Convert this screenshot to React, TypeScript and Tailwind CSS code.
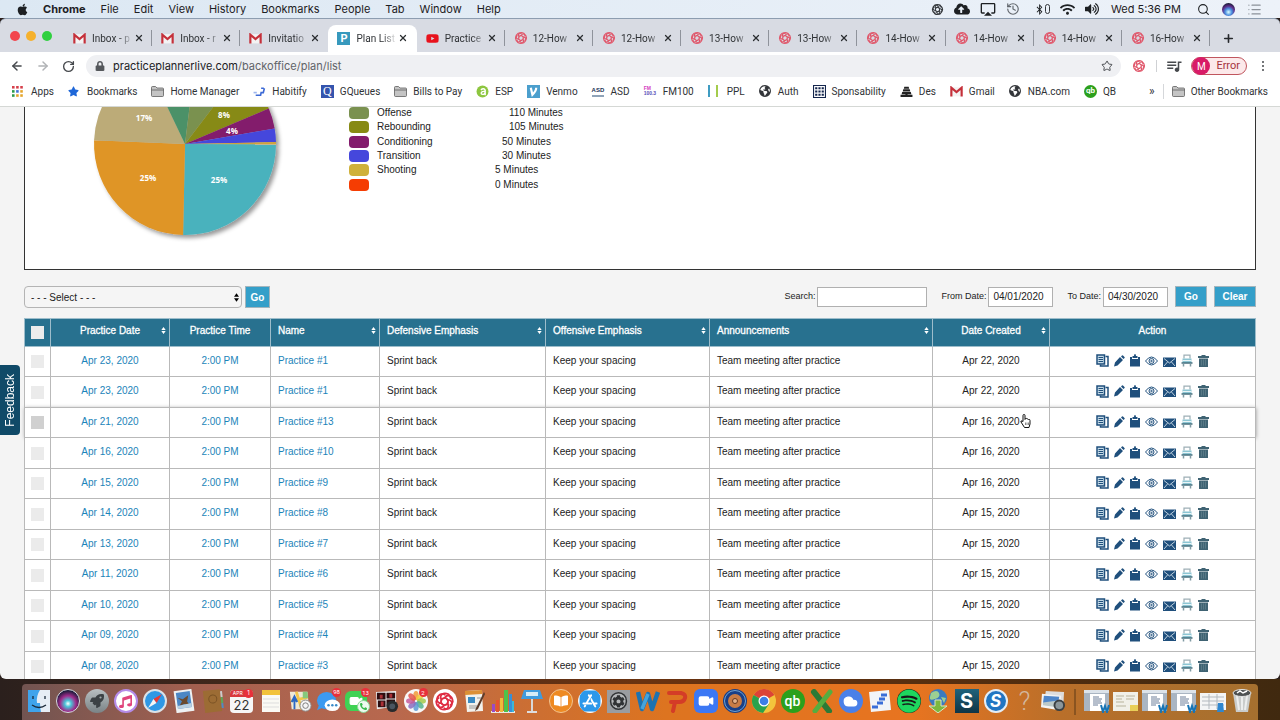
import type { ReactNode } from 'react'
import { ArrowLeft, ArrowRight, Cloud, History, List, Plus, RotateCw, Search, Star, Video, X } from 'lucide-react'
import { FaApple, FaBluetoothB, FaBookOpen, FaCloudUploadAlt, FaCog, FaLock, FaMusic, FaPhoneAlt, FaRocket, FaSpotify, FaStar, FaVolumeUp, FaWifi, FaYoutube } from 'react-icons/fa'
import { FaAppStoreIos, FaEarthAmericas } from 'react-icons/fa6'
import { MdOutlineAirplay, MdQueueMusic } from 'react-icons/md'

interface Plan {
  date: string
  name: string
  created: string
}

const plans: Plan[] = [
  { date: 'Apr 23, 2020', name: 'Practice #1', created: 'Apr 22, 2020' },
  { date: 'Apr 23, 2020', name: 'Practice #1', created: 'Apr 22, 2020' },
  { date: 'Apr 21, 2020', name: 'Practice #13', created: 'Apr 16, 2020' },
  { date: 'Apr 16, 2020', name: 'Practice #10', created: 'Apr 16, 2020' },
  { date: 'Apr 15, 2020', name: 'Practice #9', created: 'Apr 16, 2020' },
  { date: 'Apr 14, 2020', name: 'Practice #8', created: 'Apr 15, 2020' },
  { date: 'Apr 13, 2020', name: 'Practice #7', created: 'Apr 15, 2020' },
  { date: 'Apr 11, 2020', name: 'Practice #6', created: 'Apr 15, 2020' },
  { date: 'Apr 10, 2020', name: 'Practice #5', created: 'Apr 15, 2020' },
  { date: 'Apr 09, 2020', name: 'Practice #4', created: 'Apr 15, 2020' },
  { date: 'Apr 08, 2020', name: 'Practice #3', created: 'Apr 15, 2020' }
]

const legend = [
  { label: 'Offense', value: '110 Minutes', color: 'bg-[#7a9150]', indent: 'pl-[14px]' },
  { label: 'Rebounding', value: '105 Minutes', color: 'bg-[#878a14]', indent: 'pl-[14px]' },
  { label: 'Conditioning', value: '50 Minutes', color: 'bg-[#831b6c]', indent: 'pl-[7px]' },
  { label: 'Transition', value: '30 Minutes', color: 'bg-[#4547dc]', indent: 'pl-[7px]' },
  { label: 'Shooting', value: '5 Minutes', color: 'bg-[#cfb13b]', indent: '' },
  { label: '', value: '0 Minutes', color: 'bg-[#f53d03]', indent: '' }
]

// start and end are degrees, clockwise from three o'clock
const slices = [
  { start: 0.2, end: 91.2, color: '#48b2bd' },
  { start: 91.2, end: 182.3, color: '#df9527' },
  { start: 182.3, end: 244.5, color: '#bcab78' },
  { start: 244.5, end: 277, color: '#4c9168' },
  { start: 277, end: 307.3, color: '#7a9150' },
  { start: 307.3, end: 337.1, color: '#878a14' },
  { start: 337.1, end: 350.2, color: '#831b6c' },
  { start: 350.2, end: 358.8, color: '#4547dc' },
  { start: 358.8, end: 360.2, color: '#cfa33b' }
]

function slicePath(start: number, end: number) {
  const r = 91
  const rad = Math.PI / 180
  const x1 = 160 + r * Math.cos(start * rad)
  const y1 = 37 + r * Math.sin(start * rad)
  const x2 = 160 + r * Math.cos(end * rad)
  const y2 = 37 + r * Math.sin(end * rad)
  return `M160 37L${x1} ${y1}A${r} ${r} 0 ${end - start > 180 ? 1 : 0} 1 ${x2} ${y2}Z`
}

function PieChart() {
  return (
    <svg width="324" height="162" viewBox="0 0 324 162" className="shrink-0" role="img" aria-label="Practice time by category">
      <defs>
        <filter id="pieShadow" x="-10%" y="-10%" width="125%" height="125%">
          <feDropShadow dx="3" dy="3" stdDeviation="2" floodColor="#000" floodOpacity="0.4" />
        </filter>
      </defs>
      <g filter="url(#pieShadow)">
        {slices.map((s) => (
          <path key={s.start} d={slicePath(s.start, s.end)} fill={s.color} />
        ))}
      </g>
      <g fill="#fff" fontFamily="'Open Sans', sans-serif" fontSize="8" fontWeight="700" textAnchor="middle">
        <text x="119" y="14">17%</text>
        <text x="199" y="11">8%</text>
        <text x="207" y="27">4%</text>
        <text x="123" y="74">25%</text>
        <text x="194" y="76">25%</text>
      </g>
    </svg>
  )
}

function Loom({ color = '#e0566a', className = 'size-[14px]' }: { color?: string; className?: string }) {
  return (
    <svg viewBox="0 0 24 24" className={className} fill="none" stroke={color} strokeWidth="2">
      {[0, 60, 120, 180, 240, 300].map((a) => (
        <path key={a} transform={`rotate(${a} 12 12)`} d="M12 8C15 3 21 5 21.500 12C21 15 19 16 18 16.500M12 8C10 8 8.500 9.500 8 11" />
      ))}
    </svg>
  )
}

function GmailIcon() {
  return (
    <svg viewBox="0 0 24 20" className="h-[11px] w-[13px]">
      <path d="M3 2h18v17H3z" fill="#f3f3f3" />
      <path d="M2.500 19V3L12 11l9.500-8v16" fill="none" stroke="#c5303a" strokeWidth="4" />
    </svg>
  )
}

function FolderIcon() {
  return (
    <svg viewBox="0 0 26 22" className="h-[11px] w-[13px]" stroke="#555" strokeWidth="1.500">
      <path d="M1 19V3q0-2 2-2h6l3 3h11q2 0 2 2v13q0 2-2 2H3q-2 0-2-2z" fill="#c4c4c4" />
      <path d="M1 8h24" />
    </svg>
  )
}

function AppsIcon() {
  const colors = ['#d6404b', '#d6404b', '#d6404b', '#2c9a4b', '#3f72d8', '#e5a52b', '#2c9a4b', '#e5a52b', '#e5a52b']
  return (
    <svg viewBox="0 0 12 12" className="size-[11px]">
      {colors.map((c, i) => (
        <rect key={i} x={(i % 3) * 4.500} y={Math.floor(i / 3) * 4.500} width="2.800" height="2.800" fill={c} />
      ))}
    </svg>
  )
}

const bookmarks: { label: string; icon: ReactNode }[] = [
  { label: 'Apps', icon: <AppsIcon /> },
  { label: 'Bookmarks', icon: <FaStar className="size-[11px] text-[#1f67d8]" /> },
  { label: 'Home Manager', icon: <FolderIcon /> },
  {
    label: 'Habitify',
    icon: (
      <svg viewBox="0 0 24 24" className="size-[13px]" fill="none" stroke="#3d6ad6" strokeWidth="3">
        <path d="M1 14h6" stroke="#9db6ee" />
        <path d="M5 19h9l1-5h4l2-8M15 6h5" />
      </svg>
    )
  },
  {
    label: 'GQueues',
    icon: <span className="flex size-[13px] items-center justify-center bg-[#3454ad] font-['Liberation_Serif',serif] text-[12px] leading-none text-white">Q</span>
  },
  { label: 'Bills to Pay', icon: <FolderIcon /> },
  {
    label: 'ESP',
    icon: (
      <svg viewBox="0 0 24 24" className="size-[13px]">
        <circle cx="12" cy="12" r="11" fill="#8dc63f" />
        <path d="M9 9c6-5 9 0 8 4s-3 5-6 4-1-6 5-5M17 11v8" stroke="#fff" strokeWidth="2.500" fill="none" />
      </svg>
    )
  },
  {
    label: 'Venmo',
    icon: (
      <svg viewBox="0 0 24 24" className="size-[13px]">
        <path d="M0 0h24v24H0z" fill="#4b9fcd" />
        <path d="M7 5l3 13C14 14 17 10 17 5" fill="none" stroke="#fff" strokeWidth="4" />
      </svg>
    )
  },
  {
    label: 'ASD',
    icon: <span className="border-b-2 border-[#8fa3b8] font-['Liberation_Sans',sans-serif] text-[6px] font-bold leading-[9px] text-[#1a3155]">ASD</span>
  },
  {
    label: 'FM100',
    icon: <span className="flex flex-col font-['Liberation_Sans',sans-serif] text-[5px] font-bold leading-[5px] text-[#d33fc0]"><span>FM</span><span className="text-[#5a4fb8]">100.3</span></span>
  },
  {
    label: 'PPL',
    icon: <span className="flex h-[12px] w-[10px] justify-between border-x-2 border-l-[#3f9cc2] border-r-[#a4cc4c]" />
  },
  { label: 'Auth', icon: <FaEarthAmericas className="size-[12px] text-[#33363a]" /> },
  {
    label: 'Sponsability',
    icon: (
      <svg viewBox="0 0 24 24" className="size-[13px]">
        <path d="M1 1h22v22H1z" fill="#fff" stroke="#14264d" strokeWidth="2" />
        <path d="M4 4h4v4H4zM10 4h4v4h-4zM16 4h4v4h-4zM4 10h4v4H4zM10 10h4v4h-4zM16 10h4v4h-4zM4 16h4v4H4zM10 16h4v4h-4zM16 16h4v4h-4z" fill="#14264d" />
      </svg>
    )
  },
  {
    label: 'Des',
    icon: (
      <svg viewBox="0 0 24 24" className="size-[13px]" fill="#222">
        <path d="M8 3h8l1 4H7zM6 8h12l1 4H5zM4 13h16l1 4H3zM1 18h9v-1h4v1h9v4H1z" />
      </svg>
    )
  },
  { label: 'Gmail', icon: <GmailIcon /> },
  { label: 'NBA.com', icon: <FaEarthAmericas className="size-[12px] text-[#33363a]" /> },
  {
    label: 'QB',
    icon: <span className="flex size-[13px] items-center justify-center rounded-full bg-[#2ca01c] text-[8px] font-bold leading-none text-white">qb</span>
  }
]

const tabs: { title: string; icon: 'gmail' | 'plan' | 'youtube' | 'loom' }[] = [
  { title: 'Inbox - p', icon: 'gmail' },
  { title: 'Inbox - r', icon: 'gmail' },
  { title: 'Invitatio', icon: 'gmail' },
  { title: 'Plan List', icon: 'plan' },
  { title: 'Practice', icon: 'youtube' },
  { title: '12-How', icon: 'loom' },
  { title: '12-How', icon: 'loom' },
  { title: '13-How', icon: 'loom' },
  { title: '13-How', icon: 'loom' },
  { title: '14-How', icon: 'loom' },
  { title: '14-How', icon: 'loom' },
  { title: '14-How', icon: 'loom' },
  { title: '16-How', icon: 'loom' }
]

function MenuBar() {
  return (
    <header className="flex h-[18px] shrink-0 items-center bg-gradient-to-r from-[#dce8f3] to-[#edf2f9] pl-4 pr-[18px] font-[Inter,sans-serif] text-[11px] text-[#1d2023]">
      <FaApple className="size-[13px]" />
      <nav className="ml-[14px] flex flex-1 items-center gap-[15px]">
        <span className="font-bold">Chrome</span>
        {['File', 'Edit', 'View', 'History', 'Bookmarks', 'People', 'Tab', 'Window', 'Help'].map((m) => (
          <span key={m}>{m}</span>
        ))}
      </nav>
      <div className="flex items-center gap-3">
        <div className="flex items-center gap-[10px]">
          <Loom color="#33373b" className="size-[13px]" />
          <FaCloudUploadAlt className="size-[16px]" />
          <MdOutlineAirplay className="size-[16px]" />
          <History className="size-[14px] text-[#62676d]" />
          <span className="flex items-center pl-1">
            <FaBluetoothB className="size-[11px]" />
            <span className="h-[10px] w-[5px] rounded-sm border border-[#33373b]" />
          </span>
          <FaWifi className="size-[15px]" />
          <FaVolumeUp className="size-[14px]" />
        </div>
        <span>Wed 5:36 PM</span>
        <Search className="ml-1 size-[13px]" />
        <span className="size-[13px] rounded-full bg-[radial-gradient(circle_at_50%_70%,#dff_0%,#4a8fe0_30%,#5b2a86_55%,#161b33_80%)]" />
        <List className="size-[15px] text-[#8b9199]" />
      </div>
    </header>
  )
}

function TabStrip() {
  return (
    <div className="flex h-[34px] shrink-0 items-end rounded-t-md border-t border-[#8d9db0] bg-[#d8dbe3]">
      <div className="flex h-full w-[64px] shrink-0 items-center gap-[6px] pl-[10px]">
        <span className="size-[10px] rounded-full bg-[#f2454d]" />
        <span className="size-[10px] rounded-full bg-[#f6b12d]" />
        <span className="size-[10px] rounded-full bg-[#2fd03f]" />
      </div>
      {tabs.map((tab, i) => (
        <div
          key={i}
          className={`flex h-[27px] min-w-0 flex-1 items-center pb-px pl-[9px] text-[10px] text-[#2f3235] ${i === 3 ? 'rounded-t-lg bg-white' : ''}`}
        >
          <span className="flex w-[19px] shrink-0 items-center">
            {tab.icon === 'gmail' && <GmailIcon />}
            {tab.icon === 'plan' && <span className="flex size-[13px] items-center justify-center bg-[#3799bd] text-[11px] font-bold leading-none text-white">P</span>}
            {tab.icon === 'youtube' && <FaYoutube className="size-[13px] text-[#e8121c]" />}
            {tab.icon === 'loom' && <Loom />}
          </span>
          <span className="w-[41px] shrink-0 whitespace-nowrap [mask-image:linear-gradient(to_right,black_65%,transparent)]">{tab.title}</span>
          <button aria-label="Close tab" className="ml-px">
            <X className="size-[10px] text-[#2b2e31]" strokeWidth={3} />
          </button>
          {i !== 2 && i !== 3 && <span className="ml-auto h-4 w-px bg-[#8f939b]" />}
        </div>
      ))}
      <button aria-label="New tab" className="flex h-[27px] w-[70px] shrink-0 items-center pl-3">
        <Plus className="size-[13px] text-[#26292c]" strokeWidth={3} />
      </button>
    </div>
  )
}

function Toolbar() {
  return (
    <div className="flex h-[28px] shrink-0 items-center bg-white pl-[10px] pr-[14px]">
      <div className="flex items-center gap-3 pr-[11px] text-[#46494d]">
        <button aria-label="Back"><ArrowLeft className="size-[14px]" strokeWidth={2.500} /></button>
        <button aria-label="Forward"><ArrowRight className="size-[14px] text-[#b0b2b5]" strokeWidth={2.500} /></button>
        <button aria-label="Reload"><RotateCw className="size-[13px]" strokeWidth={2.500} /></button>
      </div>
      <div className="flex h-[22px] flex-1 items-center rounded-full bg-[#eff0f3] pl-[9px] pr-2">
        <FaLock className="size-[10px] text-[#55585c]" />
        <span className="ml-2 flex-1 font-[Inter,sans-serif] text-[11px] text-[#5f6368]">
          <span className="text-[#202124]">practiceplannerlive.com</span>/backoffice/plan/list
        </span>
        <Star className="size-[12px] text-[#4a4d51]" />
      </div>
      <Loom className="ml-[11px] size-[14px]" />
      <span className="ml-[10px] h-3 w-px bg-[#cfd1d4]" />
      <MdQueueMusic className="ml-2 size-[18px] text-[#46494d]" />
      <button className="ml-2 flex h-[18px] items-center gap-[6px] rounded-full border border-[#c0565e] bg-[#fce9ea] pr-[6px] text-[11px] text-[#a5333d]">
        <span className="flex size-[18px] items-center justify-center rounded-full bg-[#d81b67] text-[10px] text-white">M</span>
        Error
      </button>
      <button aria-label="Chrome menu" className="ml-[15px] mr-[2px] flex flex-col gap-[2px]">
        <span className="size-[2px] rounded-full bg-[#46494d]" />
        <span className="size-[2px] rounded-full bg-[#46494d]" />
        <span className="size-[2px] rounded-full bg-[#46494d]" />
      </button>
    </div>
  )
}

function BookmarksBar() {
  return (
    <nav className="flex h-[27px] shrink-0 items-center gap-[14px] overflow-hidden whitespace-nowrap border-b border-[#d5d8d5] bg-white pb-1 pl-3 pr-3 text-[10px] text-[#2f3235]">
      {bookmarks.map((b) => (
        <a key={b.label} href="#" className="flex items-center gap-[6px]">
          <span className="flex w-[13px] items-center">{b.icon}</span>
          {b.label}
        </a>
      ))}
      <span className="ml-auto flex items-center">
        <button aria-label="More bookmarks" className="pr-2 text-[12px] leading-none">»</button>
        <a href="#" className="flex items-center gap-[6px] border-l border-[#d5d7da] pl-2">
          <FolderIcon />
          Other Bookmarks
        </a>
      </span>
    </nav>
  )
}

function SortArrows() {
  return (
    <svg viewBox="0 0 5 8" className="h-[7px] w-[5px] shrink-0" fill="currentColor">
      <path d="M2.500 0L5 3.300H0zM2.500 8L0 4.700h5z" />
    </svg>
  )
}

function HeaderCell({ label, center, sort = true }: { label: string; center?: boolean; sort?: boolean }) {
  return (
    <th scope="col" className="border border-[#9dbdcb] pb-1 pr-[3px] font-normal">
      <div className={`flex items-center ${center ? (sort ? 'pl-2 text-center' : 'pl-[3px] text-center') : 'pl-[7px] text-left'}`}>
        <span className="flex-1 [-webkit-text-stroke:0.3px_white]">{label}</span>
        {sort && <SortArrows />}
      </div>
    </th>
  )
}

function RowActions() {
  return (
    <div className="flex items-center justify-center gap-[5px] text-[#1f4f7c]">
      <button aria-label="Copy">
        <svg viewBox="0 0 26 26" className="size-[13px]" fill="none" stroke="currentColor" strokeWidth="3">
          <path d="M2 2h15v18H2z" fill="#c5dbe8" />
          <path d="M19 5h5v19H9v-3" />
          <path d="M5 7h9M5 11h9M5 15h9" strokeWidth="2.200" />
        </svg>
      </button>
      <button aria-label="Edit">
        <svg viewBox="0 0 22 24" className="h-[12px] w-[11px]" fill="currentColor">
          <path d="M0 23l2-8L12 4l6 6L7 21zM14 3l2-2q1-1 2 0l3 3q1 1 0 2l-2 2z" />
        </svg>
      </button>
      <button aria-label="Assign">
        <svg viewBox="0 0 20 26" className="h-[13px] w-[10px]" fill="currentColor">
          <path d="M0 6h4v4h12V6h4v19H0zM5 8V4h3q0-4 2-4t2 4h3v4z" />
        </svg>
      </button>
      <button aria-label="View">
        <svg viewBox="0 0 26 20" className="h-[10px] w-[13px]" fill="none" stroke="currentColor" strokeWidth="2">
          <path d="M1 10Q13-6 25 10Q13 26 1 10z" />
          <circle cx="13" cy="10" r="5" />
          <circle cx="13" cy="10" r="1.500" />
        </svg>
      </button>
      <button aria-label="Email">
        <svg viewBox="0 0 26 20" className="mt-[2px] h-[10px] w-[13px]">
          <path d="M0 1h26v19H0z" fill="currentColor" />
          <path d="M2 3l11 9L24 3M2 18l7-8M24 18l-7-8" fill="none" stroke="#dbe7f0" strokeWidth="1.700" />
        </svg>
      </button>
      <button aria-label="Print">
        <svg viewBox="0 0 24 26" className="h-[13px] w-[12px]" fill="none">
          <path d="M6 9V2h12v7" stroke="#9eafb6" strokeWidth="2.500" fill="#fff" />
          <path d="M3 9h18v9H3z" fill="#8cc5d3" />
          <path d="M3 13h18" stroke="#eaf5f7" strokeWidth="2" />
          <path d="M1 18h22" stroke="#436e7d" strokeWidth="3" />
          <path d="M5 19v6M19 19v6" stroke="#809aa3" strokeWidth="3" />
        </svg>
      </button>
      <button aria-label="Delete">
        <svg viewBox="0 0 22 24" className="h-[12px] w-[11px]" fill="#3f6373">
          <path d="M0 2h7V0h8v2h7v4H0zM2 7h18v17H2z" />
          <path d="M7 9v12M11 9v12M15 9v12" stroke="#668592" strokeWidth="1.300" />
        </svg>
      </button>
    </div>
  )
}

function Filters() {
  const button = 'border border-[#a3b5bd] bg-[#349fc9] text-center text-[10px] font-bold text-white'
  const dateInput = 'ml-[2px] h-5 w-[65px] border border-[#b0b0b0] bg-white px-1 text-[10px]'
  return (
    <div className="mt-4 flex items-start">
      <div className="relative">
        <select aria-label="Bulk action" className="block h-[22px] w-[218px] appearance-none rounded border border-[#b4b4b4] bg-[#f5f5f5] pl-[6px] text-[10px] text-[#222]">
          <option>- - - Select - - -</option>
        </select>
        <svg viewBox="0 0 6 10" className="pointer-events-none absolute right-[3px] top-[7px] h-[9px] w-[5px]">
          <path d="M3 0l3 4H0zM3 10L0 6h6z" />
        </svg>
      </div>
      <button className={`ml-[3px] h-[22px] w-[25px] ${button}`}>Go</button>
      <form className="ml-auto flex items-center text-[9px] text-[#222]" onSubmit={(e) => e.preventDefault()}>
        <label htmlFor="search">Search:</label>
        <input id="search" className="ml-[2px] h-5 w-[110px] border border-[#b0b0b0] bg-white px-1 text-[10px]" />
        <label htmlFor="from" className="ml-[14px]">From Date:</label>
        <input id="from" defaultValue="04/01/2020" className={dateInput} />
        <label htmlFor="to" className="ml-[14px]">To Date:</label>
        <input id="to" defaultValue="04/30/2020" className={dateInput} />
        <button className={`ml-[7px] h-[21px] w-8 ${button}`}>Go</button>
        <button type="reset" className={`ml-[7px] h-[21px] w-[42px] ${button}`}>Clear</button>
      </form>
    </div>
  )
}

function PlanTable() {
  const cell = 'border border-[#b9b9b9] pb-[2px]'
  return (
    <table className="mt-[10px] w-full table-fixed border-collapse text-[10px] leading-3 text-[#222]">
      <colgroup>
        <col className="w-[26px]" />
        <col className="w-[119px]" />
        <col className="w-[101px]" />
        <col className="w-[109px]" />
        <col className="w-[166px]" />
        <col className="w-[164px]" />
        <col className="w-[223px]" />
        <col className="w-[117px]" />
        <col className="w-[206px]" />
      </colgroup>
      <thead>
        <tr className="h-[28px] bg-[#28718f] text-white">
          <th className="border border-[#9dbdcb] p-0">
            <input type="checkbox" aria-label="Select all" className="mx-auto block size-[13px] appearance-none bg-[#ececec]" />
          </th>
          <HeaderCell label="Practice Date" center />
          <HeaderCell label="Practice Time" center sort={false} />
          <HeaderCell label="Name" />
          <HeaderCell label="Defensive Emphasis" />
          <HeaderCell label="Offensive Emphasis" />
          <HeaderCell label="Announcements" />
          <HeaderCell label="Date Created" center />
          <HeaderCell label="Action" center sort={false} />
        </tr>
      </thead>
      <tbody>
        {plans.map((plan, i) => (
          <tr key={i} className={`h-[30px] bg-white even:h-[31px] ${i === 2 ? 'shadow-[0_0_4px_rgba(0,0,0,0.4)]' : ''}`}>
            <td className="border border-[#b9b9b9] p-0">
              <input
                type="checkbox"
                aria-label={`Select ${plan.name}`}
                className={`mx-auto block size-[13px] appearance-none ${i === 2 ? 'bg-[#d0d0d0]' : 'bg-[#ebebeb]'}`}
              />
            </td>
            <td className={`${cell} text-center`}><a href="#" className="text-[#1b84b9]">{plan.date}</a></td>
            <td className={`${cell} text-center`}><a href="#" className="text-[#1b84b9]">2:00 PM</a></td>
            <td className={`${cell} pl-[7px]`}><a href="#" className="text-[#1b84b9]">{plan.name}</a></td>
            <td className={`${cell} pl-[7px]`}>Sprint back</td>
            <td className={`${cell} pl-[7px]`}>Keep your spacing</td>
            <td className={`${cell} pl-[7px]`}>Team meeting after practice</td>
            <td className={`${cell} text-center`}>{plan.created}</td>
            <td className={cell}><RowActions /></td>
          </tr>
        ))}
      </tbody>
    </table>
  )
}

function Round({ className, children }: { className: string; children?: ReactNode }) {
  return <span className={`flex size-6 items-center justify-center rounded-full ${className}`}>{children}</span>
}

function Badge({ children }: { children: ReactNode }) {
  return <span className="absolute -top-px right-0 flex h-[9px] min-w-[9px] items-center justify-center rounded-full bg-[#e8303a] px-px text-[6px] leading-none text-white">{children}</span>
}

function WordDoc() {
  return (
    <svg viewBox="0 0 26 24" className="w-[26px]">
      <path d="M0 1h25v21H0z" fill="#a9b5c2" />
      <path d="M0 1h25v3H0z" fill="#dce3ea" />
      <path d="M6 5h15v17H6z" fill="#fff" />
      <path d="M9 8h6M9 10h9M9 12h8M9 14h9M9 16h5" stroke="#6d7f99" />
      <path d="M17 16l2 7 2-6 2 6 2-7" fill="none" stroke="#1674b5" strokeWidth="2" />
    </svg>
  )
}

const dockApps: ReactNode[] = [
  <svg viewBox="0 0 24 24" className="size-6">
    <path d="M1 1h22v22H1z" fill="#e6edf5" />
    <path d="M1 1h12q-4 6-3 13h3q0 5 1 9H1z" fill="#3fa4ec" />
    <path d="M6 7v3M18 7v3M5 16q7 5 14 0" stroke="#1b2a3a" strokeWidth="1.300" fill="none" />
  </svg>,
  <Round className="border border-[#d8d8e0] bg-[radial-gradient(circle_at_50%_62%,#fff_0%,#4ac5d8_18%,#a02c8c_45%,#171a38_75%)]" />,
  <Round className="bg-gradient-to-b from-[#b9c0c2] to-[#7a8386] text-[#3c4245]"><FaRocket className="size-[14px]" /></Round>,
  <Round className="border-2 border-[#b58be8] bg-white text-[#e0457c]"><FaMusic className="size-[13px]" /></Round>,
  <svg viewBox="0 0 24 24" className="size-6">
    <circle cx="12" cy="12" r="11" fill="#2f98e6" stroke="#dbe2e8" strokeWidth="2" />
    <path d="M19 5l-5.500 9-3-4z" fill="#e83a35" />
    <path d="M5 19l5.500-9 3 4z" fill="#f5f5f5" />
  </svg>,
  <svg viewBox="0 0 24 24" className="size-6">
    <g transform="rotate(-8 12 12)">
      <path d="M3 1h18v22H3z" fill="#eef1f2" />
      <path d="M5 3h14v16H5z" fill="#4b87c5" />
      <path d="M6 8l5 2 6-3-2 6 2 4-5-2-5 1 3-4z" fill="#6b4a2e" />
      <path d="M5 16l14-1v4H5z" fill="#b9cfe0" />
    </g>
  </svg>,
  <svg viewBox="0 0 24 24" className="size-6">
    <g transform="rotate(-6 12 12)">
      <path d="M3 1h17v22H3z" fill="#9c6c34" />
      <path d="M20 3h2v6h-2z" fill="#ccc" /><path d="M20 9h2v6h-2z" fill="#5ba75c" /><path d="M20 15h2v5h-2z" fill="#508cc4" />
      <circle cx="12" cy="10" r="4" fill="none" stroke="#7a5224" />
    </g>
  </svg>,
  <span className="relative flex h-[23px] w-[23px] flex-col items-center rounded-sm bg-[#f6f6f6] font-[Inter,sans-serif]">
    <span className="h-[7px] w-full rounded-t-sm bg-[#d9373c] text-[5px] leading-[7px] text-white">&nbsp; APR</span>
    <span className="text-[13px] leading-4 text-[#333]">22</span>
    <Badge>1</Badge>
  </span>,
  <svg viewBox="0 0 24 24" className="size-6">
    <path d="M3 1h18v22H3z" fill="#faf9f4" /><path d="M3 1h18v5H3z" fill="#f2c23a" />
    <path d="M4 10h16M4 14h16M4 18h16" stroke="#ddd" />
  </svg>,
  <svg viewBox="0 0 26 24" className="size-6">
    <path d="M2 2h19l2 19H4z" fill="#eee8d4" /><path d="M9 2l6 19M3 12l18-4" stroke="#f2c64a" strokeWidth="3" />
    <path d="M16 2h5l1 7h-6z" fill="#85c97c" /><path d="M7 21V10l-3 3 3-6 3 6-3-3" stroke="#2b68c5" strokeWidth="2" />
    <circle cx="19" cy="17" r="6" fill="#f4f4f4" stroke="#888" /><circle cx="19" cy="17" r="3" fill="none" stroke="#777" />
  </svg>,
  <span className="relative">
    <svg viewBox="0 0 26 24" className="size-[25px]">
      <ellipse cx="11" cy="11" rx="10" ry="9" fill="#3c9af0" /><path d="M3 16l-2 5 7-3z" fill="#3c9af0" />
      <ellipse cx="17" cy="16" rx="8" ry="6" fill="#fff" />
      <g fill="#3b8ac8"><circle cx="13" cy="16" r="1.300" /><circle cx="17" cy="16" r="1.300" /><circle cx="21" cy="16" r="1.300" /></g>
    </svg>
    <Badge>98</Badge>
  </span>,
  <span className="relative flex h-6 w-[25px] items-center">
    <span className="flex h-[20px] w-[22px] items-center justify-center rounded-md bg-[#3fd254]"><Video className="size-[14px] fill-white text-white" /></span>
    <span className="absolute bottom-0 right-0 flex size-[13px] items-center justify-center rounded-full border border-[#8ad695] bg-[#eefaf0] text-[#37bb4b]"><FaPhoneAlt className="size-[7px]" /></span>
    <Badge>13</Badge>
  </span>,
  <svg viewBox="0 0 26 24" className="size-[25px]">
    <path d="M2 2l21-1v16L3 20z" fill="#eee" /><path d="M3 3h9v7H3zM13 3h9v6h-9zM4 11h8v7H4zM13 10h9v7h-9z" fill="#2c0d10" />
    <path d="M6 5h3v4H6zM16 4h3v4h-3zM7 12h3v5H7z" fill="#a93036" /><circle cx="19" cy="17" r="6" fill="#282a2c" /><circle cx="19" cy="17" r="3" fill="#4a5560" />
  </svg>,
  <span className="relative">
    <svg viewBox="0 0 24 24" className="size-6">
      <circle cx="12" cy="12" r="12" fill="#f7f7f7" />
      {['#f19a37', '#f4ce3b', '#a5ca4b', '#56b48b', '#5a9bd5', '#8b6ec0', '#c65c9a', '#e4564e'].map((c, i) => (
        <ellipse key={c} cx="12" cy="6.500" rx="2.700" ry="4.500" fill={c} opacity="0.85" transform={`rotate(${i * 45} 12 12)`} />
      ))}
    </svg>
    <Badge>2</Badge>
  </span>,
  <Round className="bg-white"><Loom color="#df2d43" className="size-[21px]" /></Round>,
  <svg viewBox="0 0 24 24" className="size-6">
    <path d="M3 2l17-1 1 21-16 1z" fill="#f2f1ec" /><path d="M3 2l17-1v4L3 6z" fill="#dc9035" />
    <path d="M6 8h7v6H6z" fill="#3a8ac2" /><path d="M7 17h8M7 19h8M15 9h4" stroke="#999" /><path d="M22 3L14 19l-1 3 3-2 7-15z" fill="#5a3b2a" />
  </svg>,
  <svg viewBox="0 0 24 24" className="size-6">
    <path d="M0 22h24v2H0z" fill="#ece7e1" /><path d="M1 15h3v8H1z" fill="#9a4ac7" /><path d="M5 11h3v12H5z" fill="#e6532e" /><path d="M9 9h3v14H9z" fill="#f1b93a" />
    <path d="M13 1h4v22h-4z" fill="#4cc24a" /><path d="M18 5h3v18h-3z" fill="#3790d8" /><path d="M21 12h2v11h-2z" fill="#3cb8d8" />
  </svg>,
  <svg viewBox="0 0 24 24" className="size-6">
    <path d="M4 1h16l3 9H1z" fill="#3f9bde" /><path d="M6 3h12v4H6z" fill="#d5ecf7" /><path d="M12 10v12" stroke="#d8d8d8" strokeWidth="2" /><path d="M7 22h10v2H7z" fill="#ddd" />
  </svg>,
  <Round className="border border-[#f1c391] bg-[#ee8a22] text-white"><FaBookOpen className="size-[14px]" /></Round>,
  <Round className="border border-white bg-white text-[#2c98ea]"><FaAppStoreIos className="size-6 rounded-full" /></Round>,
  <span className="flex size-[23px] items-center justify-center bg-[#9a9da0] text-[#303335]"><Round className="scale-75 border-2 border-[#303335] bg-[#b5b8ba]"><FaCog className="size-[17px]" /></Round></span>,
  <svg viewBox="0 0 24 24" className="size-6"><path d="M2 3l4 17 6-15 4 15 6-17" fill="none" stroke="#1d72b0" strokeWidth="4.500" strokeLinejoin="round" /><path d="M6 20l6-15" stroke="#46a4dc" strokeWidth="3.500" /></svg>,
  <svg viewBox="0 0 24 24" className="size-6"><path d="M8 22l2-9M4 4h12q5 1 4 5t-6 4H6" fill="none" stroke="#d43c27" strokeWidth="4" strokeLinecap="round" strokeLinejoin="round" /></svg>,
  <span className="flex size-6 items-center justify-center rounded-md bg-[#3c78f4]"><Video className="size-4 fill-white text-white" /></span>,
  <Round className="border-[5px] border-[#193f87] bg-[#c97c46] outline outline-[#6fa4d4] -outline-offset-2"><span className="size-[6px] rounded-full border border-[#67371c] bg-[#e3b08a]" /></Round>,
  <svg viewBox="0 0 24 24" className="size-6">
    <circle cx="12" cy="12" r="12" fill="#f3c43c" /><path d="M12 12L1.600 6A12 12 0 0 1 22.400 6z" fill="#dc4337" /><path d="M12 12L1.600 6A12 12 0 0 0 11 24l6-9z" fill="#2ba24c" />
    <circle cx="12" cy="12" r="5.500" fill="#fff" /><circle cx="12" cy="12" r="4.300" fill="#3d7ee6" />
  </svg>,
  <Round className="bg-[#2ca01c] pb-px text-[14px] font-medium leading-none text-white">qb</Round>,
  <svg viewBox="0 0 24 24" className="size-6"><path d="M4 3l15 19" stroke="#2c7a36" strokeWidth="6" strokeLinecap="round" /><path d="M20 3L5 22" stroke="#55ad40" strokeWidth="5" strokeLinecap="round" /></svg>,
  <Round className="bg-[#4a80e8] text-white"><Cloud className="size-[15px] fill-white" /></Round>,
  <svg viewBox="0 0 24 24" className="size-6"><path d="M1 3l20-2 2 20-20 2z" fill="#f2f4f7" /><path d="M13 6h6M11 10h6M9 14h6M4 18h6" stroke="#3a6ed8" strokeWidth="3" /></svg>,
  <Round className="bg-[#17191a] text-[#1ed75f]"><FaSpotify className="size-6" /></Round>,
  <svg viewBox="0 0 24 24" className="size-6"><circle cx="12" cy="9" r="9" fill="#3a7ac0" /><path d="M5 4q6-4 8 0t-4 6-5-2zM15 8l5 1-2 5z" fill="#9ccf92" /><path d="M9 11h6v6h6l-9 7-9-7h6z" fill="#7cb83e" stroke="#d9e6c4" /></svg>,
  <span className="flex size-6 items-center justify-center bg-gradient-to-b from-[#20637c] to-[#0f3546] font-[Inter,sans-serif] text-[20px] font-bold leading-none text-white">S</span>,
  <Round className="border-2 border-[#e4edf6] bg-[#2175c2] font-[Inter,sans-serif] text-[17px] font-bold italic leading-none text-white">S</Round>,
  <span className="text-[26px] font-light leading-none text-[#d3b79d]">?</span>,
  <svg viewBox="0 0 26 24" className="size-[25px]">
    <path d="M5 1l19 1-1 17L3 15z" fill="#ddd" /><path d="M1 4l20 2-2 15L0 18z" fill="#f3f3f3" /><path d="M3 6l16 1-1 5L2 14z" fill="#4f86c9" /><path d="M2 13l16-2-1 7-15-2z" fill="#bcc9c8" />
    <circle cx="19" cy="16" r="5" fill="#8b969b" stroke="#3b3f42" strokeWidth="2" />
  </svg>
]

const dockFiles: ReactNode[] = [
  <WordDoc />,
  <svg viewBox="0 0 26 24" className="w-[26px]"><path d="M0 3h25v19H0z" fill="#f1f0e8" /><path d="M3 7h8M3 10h6M3 13h8M13 7h9M13 10h8M3 17h10" stroke="#b8b39b" /><path d="M17 16h8v6h-8z" fill="#e9cf58" /></svg>,
  <WordDoc />,
  <WordDoc />,
  <svg viewBox="0 0 26 24" className="w-[26px]"><path d="M0 4h26v17H0z" fill="#f4f5f6" /><path d="M2 8h22M2 12h22M2 16h22M9 5v15M17 5v15" stroke="#b3b9bf" /><path d="M18 14h5l1 9h-7z" fill="#2f87d0" /></svg>,
  <svg viewBox="0 0 24 24" className="size-6"><path d="M3 4h18l-3 19H6z" fill="#c9cccb" /><path d="M7 7l2 14M12 7v14M17 7l-2 14" stroke="#eceeee" strokeWidth="2" /><ellipse cx="12" cy="4" rx="9" ry="3.500" fill="#4d5152" stroke="#e2e3e3" /><path d="M7 4l3-2 3 2 4-2" stroke="#fff" strokeWidth="1.500" fill="none" /></svg>
]

function Dock() {
  return (
    <footer className="flex shrink-0 justify-center bg-gradient-to-r from-[#2b201d] via-[#6b3310] to-[#40290f] pt-[5px]">
      <div className="flex h-[36px] items-start rounded-t bg-[linear-gradient(to_right,#715451_0%,#a3604f_14%,#b8684e_30%,#cd6f31_42%,#dd7420_52%,#e87420_72%,#b96f2a_84%,#a5702f_100%)] px-[2px] pt-[5px]">
        {dockApps.map((icon, i) => (
          <span key={i} className="flex h-6 w-[29px] items-center justify-center">{icon}</span>
        ))}
        <span className="mx-[6px] h-[26px] w-[2px] bg-[#8a5420]" />
        {dockFiles.map((icon, i) => (
          <span key={i} className="flex h-6 w-[29px] items-center justify-center">{icon}</span>
        ))}
      </div>
    </footer>
  )
}

export default function App() {
  return (
    <div className="flex h-screen flex-col overflow-hidden bg-[#2b201d] font-[Roboto,sans-serif]">
      <MenuBar />
      <TabStrip />
      <Toolbar />
      <BookmarksBar />
      <main className="relative min-h-0 flex-1 overflow-hidden rounded-b-md bg-[#f4f4f4] px-6 font-['Liberation_Sans',Arial,sans-serif]">
        <section className="flex overflow-hidden border-x border-b border-[#333] bg-white">
          <PieChart />
          <ul className="-mt-px grid h-[86px] grid-rows-6 text-[10px] leading-3 text-[#222]">
            {legend.map((item) => (
              <li key={item.value} className="flex items-center">
                <span className={`h-3 w-5 rounded-sm ${item.color}`} />
                <span className="ml-2 w-[118px]">{item.label}</span>
                <span className={item.indent}>{item.value}</span>
              </li>
            ))}
          </ul>
        </section>
        <Filters />
        <PlanTable />
        <button className="absolute left-0 top-[258px] flex h-[70px] w-5 items-center justify-center rounded-r bg-[#104a68] text-[12px] text-white">
          <span className="rotate-180 [writing-mode:vertical-rl]">Feedback</span>
        </button>
        <svg viewBox="0 0 22 28" className="pointer-events-none absolute left-[1020px] top-[307px] h-[14px] w-[11px]">
          <path d="M6 15V3q0-2 2-2t2 2v8l1-2q2-1 3 1 2-1 3 1 3-1 3 2v7l-2 7H9L2 16q-1-3 2-2z" fill="#fff" stroke="#111" strokeWidth="2" />
          <path d="M11 17v5M14 17v5M17 17v5" stroke="#111" />
        </svg>
      </main>
      <Dock />
    </div>
  )
}
